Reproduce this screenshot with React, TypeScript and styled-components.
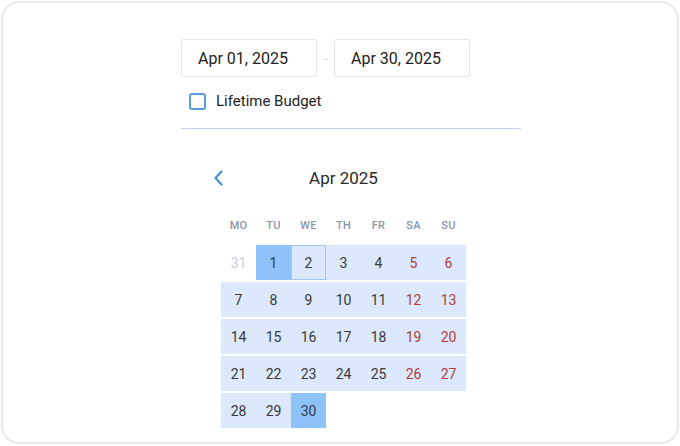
import React from "react";
import styled, { createGlobalStyle } from "styled-components";

const Global = createGlobalStyle`
  html, body { margin: 0; padding: 0; background: #ffffff; }
  body { font-family: Roboto, "Noto Sans", Arial, sans-serif; }
  * { box-sizing: border-box; }
`;

const Card = styled.div`
  margin: 1px;
  width: 678px;
  height: 443px;
  border: 2px solid #e7e9ee;
  border-radius: 18px;
  background: #fff;
  padding: 36px 0 0 178px;
  overflow: hidden;
`;

const Panel = styled.div`
  width: 340px;
  display: flex;
  flex-direction: column;
`;

const DateRow = styled.div`
  display: flex;
  align-items: center;
`;

const DateInput = styled.div`
  width: 136px;
  height: 38px;
  border: 1px solid #e3e5ea;
  border-radius: 2px;
  padding-left: 16px;
  display: flex;
  align-items: center;
  font-size: 16px;
  color: #222;
`;

const Dash = styled.span`
  width: 17px;
  text-align: center;
  color: #d0d3d9;
  font-size: 13px;
`;

const CheckRow = styled.label`
  display: flex;
  align-items: center;
  gap: 10px;
  margin: 15px 0 0 8px;
  font-size: 15px;
  color: #222;
`;

const Box = styled.span`
  width: 17px;
  height: 17px;
  border: 2px solid #5a9be6;
  border-radius: 3px;
`;

const Divider = styled.div`
  height: 1px;
  background: #c3d2e8;
  margin-top: 18px;
`;

const Calendar = styled.div`
  margin: 34px 0 0 40px;
  width: 245px;
`;

const Header = styled.div`
  margin-left: -8px;
  width: 261px;
  height: 30px;
  display: grid;
  grid-template-columns: 30px 1fr 30px;
  align-items: center;
`;

const Arrow = styled.span`
  display: flex;
  align-items: center;
  color: #4a8ed9;
`;

const Title = styled.div`
  text-align: center;
  font-size: 17px;
  color: #2a2a2a;
`;

const WeekHead = styled.div`
  display: grid;
  grid-template-columns: repeat(7, 35px);
  margin-top: 24px;
  height: 16px;
  align-items: center;
`;

const WeekDay = styled.span`
  text-align: center;
  font-size: 11px;
  font-weight: 500;
  color: #8b95a7;
  letter-spacing: 0.2px;
`;

const Grid = styled.div`
  display: grid;
  grid-template-columns: repeat(7, 35px);
  grid-auto-rows: 35px;
  row-gap: 2px;
  margin-top: 12px;
`;

type Kind = "out" | "sel" | "today" | "day";

const Cell = styled.div<{ $kind: Kind; $weekend: boolean }>`
  display: flex;
  align-items: center;
  justify-content: center;
  font-size: 14px;
  background: ${(p) =>
    p.$kind === "out" ? "transparent" : p.$kind === "sel" ? "#8dc3f8" : "#dce8fc"};
  border: ${(p) => (p.$kind === "today" ? "1px solid #a4c7ef" : "none")};
  color: ${(p) =>
    p.$kind === "out"
      ? "#c9cdd4"
      : p.$kind === "sel"
      ? "#2c3a4a"
      : p.$weekend
      ? "#b03c3c"
      : "#3a3a3a"};
`;

const days: { n: number; kind: Kind }[] = [
  { n: 31, kind: "out" },
  ...Array.from({ length: 30 }, (_, i) => ({
    n: i + 1,
    kind: (i + 1 === 1 || i + 1 === 30 ? "sel" : i + 1 === 2 ? "today" : "day") as Kind,
  })),
];

export default function App() {
  return (
    <>
      <Global />
      <Card>
        <Panel>
          <DateRow>
            <DateInput>Apr 01, 2025</DateInput>
            <Dash>-</Dash>
            <DateInput>Apr 30, 2025</DateInput>
          </DateRow>
          <CheckRow>
            <Box />
            Lifetime Budget
          </CheckRow>
          <Divider />
          <Calendar>
            <Header>
              <Arrow>
                <svg width="12" height="16" viewBox="0 0 12 16" fill="none">
                  <path d="M8.5 1.5 L2.5 8 L8.5 14.5" stroke="currentColor" strokeWidth="2.2" strokeLinecap="round" strokeLinejoin="round" />
                </svg>
              </Arrow>
              <Title>Apr 2025</Title>
              <span />
            </Header>
            <WeekHead>
              {["MO", "TU", "WE", "TH", "FR", "SA", "SU"].map((d) => (
                <WeekDay key={d}>{d}</WeekDay>
              ))}
            </WeekHead>
            <Grid>
              {days.map((d, i) => (
                <Cell key={i} $kind={d.kind} $weekend={i % 7 >= 5}>
                  {d.n}
                </Cell>
              ))}
            </Grid>
          </Calendar>
        </Panel>
      </Card>
    </>
  );
}
